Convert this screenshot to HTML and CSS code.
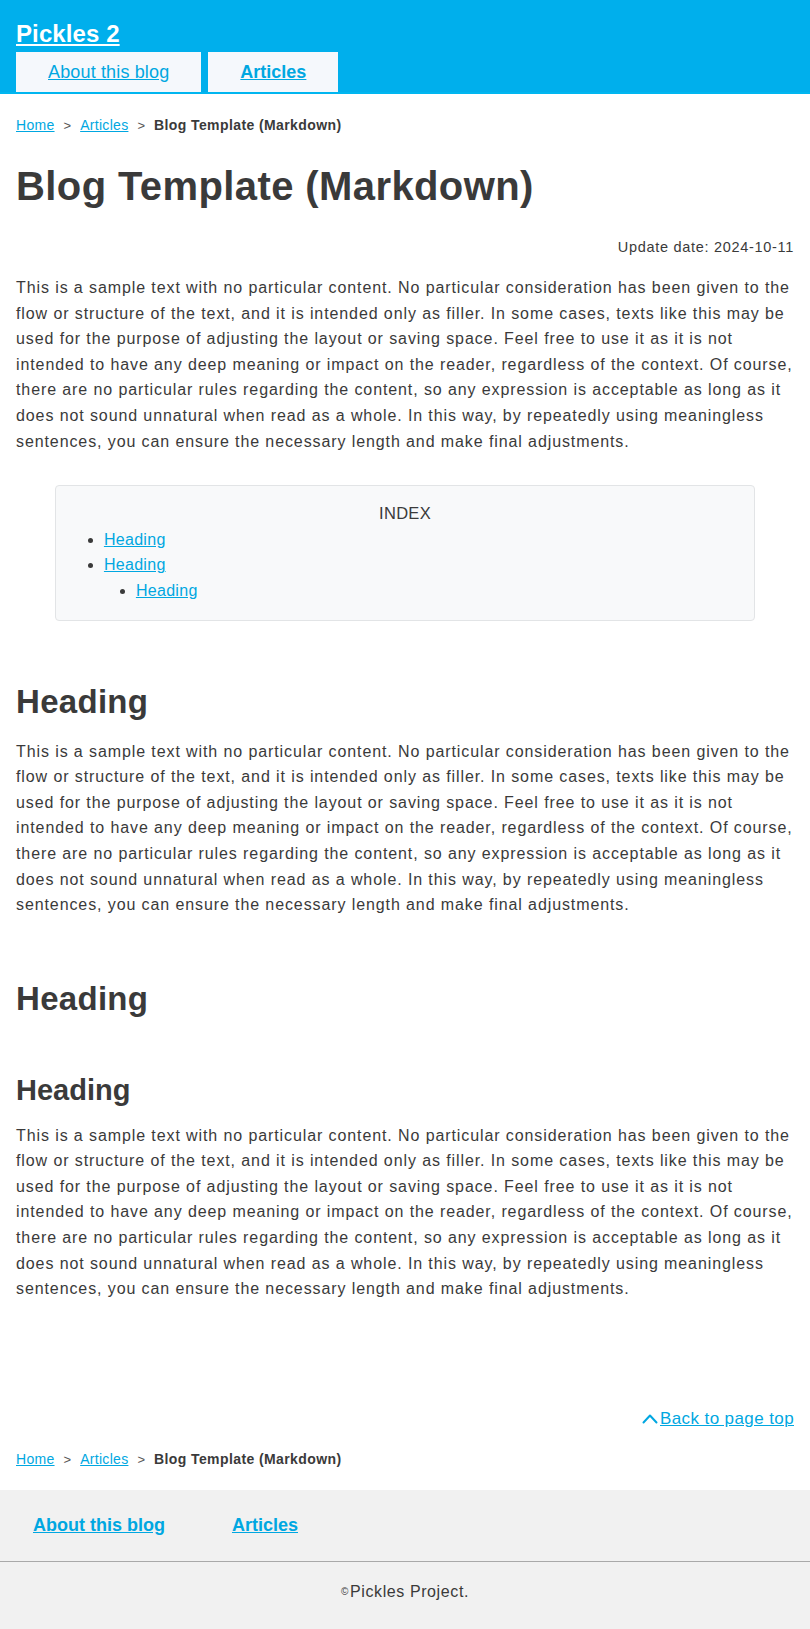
FILE: index.html
```html
<!DOCTYPE html>
<html lang="en">
<head>
<meta charset="utf-8">
<title>Blog Template (Markdown)</title>
<link rel="stylesheet" href="styles.css">
</head>
<body>
<header class="site-header">
  <div class="site-title"><a href="#">Pickles 2</a></div>
  <nav class="global-nav">
    <a class="tab" href="#">About this blog</a>
    <a class="tab tab-current" href="#">Articles</a>
  </nav>
</header>

<main class="main">
  <div class="breadcrumb">
    <a href="#">Home</a><span class="sep">&gt;</span><a href="#">Articles</a><span class="sep">&gt;</span><span class="current">Blog Template (Markdown)</span>
  </div>

  <h1 class="page-title">Blog Template (Markdown)</h1>
  <div class="update-date">Update date: 2024-10-11</div>

  <p class="text">This is a sample text with no particular content. No particular consideration has been given to the flow or structure of the text, and it is intended only as filler. In some cases, texts like this may be used for the purpose of adjusting the layout or saving space. Feel free to use it as it is not intended to have any deep meaning or impact on the reader, regardless of the context. Of course, there are no particular rules regarding the content, so any expression is acceptable as long as it does not sound unnatural when read as a whole. In this way, by repeatedly using meaningless sentences, you can ensure the necessary length and make final adjustments.</p>

  <div class="toc">
    <div class="toc-title">INDEX</div>
    <ul class="toc-list">
      <li><a href="#">Heading</a></li>
      <li><a href="#">Heading</a>
        <ul class="toc-sub">
          <li><a href="#">Heading</a></li>
        </ul>
      </li>
    </ul>
  </div>

  <h2 class="h2">Heading</h2>
  <p class="text text-after-h2">This is a sample text with no particular content. No particular consideration has been given to the flow or structure of the text, and it is intended only as filler. In some cases, texts like this may be used for the purpose of adjusting the layout or saving space. Feel free to use it as it is not intended to have any deep meaning or impact on the reader, regardless of the context. Of course, there are no particular rules regarding the content, so any expression is acceptable as long as it does not sound unnatural when read as a whole. In this way, by repeatedly using meaningless sentences, you can ensure the necessary length and make final adjustments.</p>

  <h2 class="h2">Heading</h2>
  <h3 class="h3">Heading</h3>
  <p class="text text-after-h3">This is a sample text with no particular content. No particular consideration has been given to the flow or structure of the text, and it is intended only as filler. In some cases, texts like this may be used for the purpose of adjusting the layout or saving space. Feel free to use it as it is not intended to have any deep meaning or impact on the reader, regardless of the context. Of course, there are no particular rules regarding the content, so any expression is acceptable as long as it does not sound unnatural when read as a whole. In this way, by repeatedly using meaningless sentences, you can ensure the necessary length and make final adjustments.</p>

  <div class="back-top">
    <a href="#"><svg class="back-top-icon" width="16" height="11" viewBox="0 0 16 11" aria-hidden="true"><polyline points="1.5,9.5 8,2.5 14.5,9.5" fill="none" stroke="#00a7e1" stroke-width="2" stroke-linecap="round" stroke-linejoin="round"/></svg><span class="back-top-text">Back to page top</span></a>
  </div>

  <div class="breadcrumb breadcrumb-bottom">
    <a href="#">Home</a><span class="sep">&gt;</span><a href="#">Articles</a><span class="sep">&gt;</span><span class="current">Blog Template (Markdown)</span>
  </div>
</main>

<footer class="site-footer">
  <nav class="footer-nav">
    <a href="#">About this blog</a>
    <a href="#">Articles</a>
  </nav>
  <div class="copyright"><span class="copy-mark">&copy;</span>Pickles Project.</div>
</footer>
</body>
</html>
```

FILE: styles.css
```css
* {
  box-sizing: border-box;
}

html, body {
  margin: 0;
  padding: 0;
}

body {
  font-family: "Liberation Sans", Arial, sans-serif;
  color: #3a3a3a;
  background: #ffffff;
  font-size: 16px;
  line-height: 1.6;
}

a {
  color: #00a7e1;
}

/* Header */
.site-header {
  background: #00afec;
  padding: 16px 16px 0;
  border-bottom: 2px solid #00b6f0;
}

.site-title {
  font-size: 24px;
  font-weight: bold;
  line-height: 36px;
  letter-spacing: 0.1px;
}

.site-title a {
  color: #ffffff;
}

.global-nav {
  display: flex;
  gap: 7px;
}

.tab {
  display: block;
  background: #f5f8fc;
  padding: 8px 32px;
  font-size: 18px;
  line-height: 24px;
  color: #00a7e1;
  letter-spacing: 0.15px;
}

.tab-current {
  font-weight: bold;
  letter-spacing: 0;
}

/* Main */
.main {
  padding: 0 16px;
}

.breadcrumb {
  margin-top: 20px;
  font-size: 14px;
  line-height: 22px;
}

.breadcrumb a {
  color: #00a7e1;
  letter-spacing: 0.3px;
}

.breadcrumb .sep {
  display: inline-block;
  margin: 0 9px;
  color: #555;
  font-size: 13px;
}

.breadcrumb .current {
  font-weight: bold;
  color: #3a3a3a;
  letter-spacing: 0.4px;
}

.page-title {
  margin: 21px 0 0;
  font-size: 40px;
  line-height: 56px;
  font-weight: bold;
  letter-spacing: 0.4px;
}

.update-date {
  margin-top: 22px;
  text-align: right;
  font-size: 14.5px;
  line-height: 22px;
  letter-spacing: 0.7px;
}

.text {
  margin: 17px 0 0;
  font-size: 16px;
  line-height: 25.6px;
  letter-spacing: 0.9px;
}

.toc {
  width: 90%;
  margin: 31px auto 0;
  background: #f8f9fa;
  border: 1px solid #e2e4e6;
  border-radius: 4px;
  padding: 15px 16px 16px;
  line-height: 25.6px;
}

.toc-title {
  text-align: center;
  font-size: 16.5px;
  letter-spacing: 0.3px;
}

.toc-list,
.toc-sub {
  margin: 0;
  padding-left: 32px;
  list-style: disc;
}

.toc-list a {
  letter-spacing: 0.3px;
}

.h2 {
  margin: 58px 0 0;
  font-size: 33px;
  line-height: 46px;
  font-weight: bold;
  letter-spacing: 0.3px;
}

.text-after-h2 {
  margin-top: 14px;
}

.h3 {
  margin: 48px 0 0;
  font-size: 29px;
  line-height: 40px;
  font-weight: bold;
}

.text-after-h3 {
  margin-top: 13px;
}

.back-top {
  margin-top: 104px;
  text-align: right;
  line-height: 25.6px;
}

.back-top a {
  display: inline-flex;
  align-items: center;
  gap: 2px;
}

.back-top-text {
  font-size: 17px;
  letter-spacing: 0.4px;
}

.breadcrumb-bottom {
  margin-top: 16px;
}

/* Footer */
.site-footer {
  margin-top: 19px;
  background: #f1f1f1;
}

.footer-nav {
  display: flex;
  gap: 67px;
  padding: 23px 33px;
  font-size: 18px;
  line-height: 25px;
  font-weight: bold;
  border-bottom: 1px solid #a9a9a9;
}

.copyright {
  text-align: center;
  padding: 18px 0 26px;
  font-size: 16px;
  line-height: 24px;
  letter-spacing: 0.6px;
}

.copy-mark {
  font-size: 10px;
  vertical-align: 2px;
  margin-right: 1px;
}
```
